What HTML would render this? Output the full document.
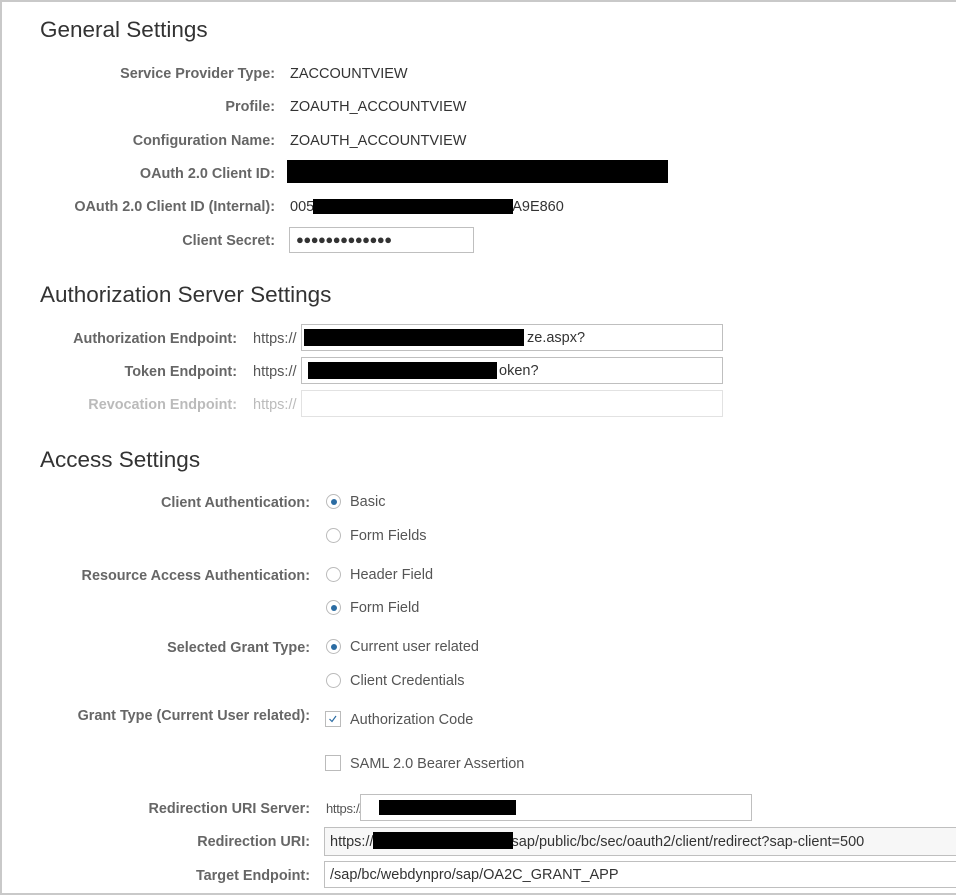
<!DOCTYPE html>
<html><head><style>
body{margin:0;width:956px;height:895px;overflow:hidden;background:#fff;font-family:"Liberation Sans",Arial,sans-serif;}
.frame{position:absolute;left:0;top:0;width:954px;height:891px;border:2px solid #c9c9c9;border-right:none;}
h2{position:absolute;margin:0;font-weight:normal;font-size:22.5px;color:#333;}
.l{position:absolute;font-weight:bold;font-size:14.4px;color:#666;text-align:right;white-space:nowrap;}
.v{position:absolute;font-size:14.5px;color:#333;white-space:nowrap;}
.in{position:absolute;border:1px solid #bfbfbf;background:#fff;box-sizing:border-box;font-size:14.5px;color:#333;padding:0 6px;white-space:nowrap;overflow:hidden;}
.blk{position:absolute;background:#000;}
.r{position:absolute;width:15px;height:15px;border:1px solid #bbb;border-radius:50%;box-sizing:border-box;background:#fff;}
.r.on::after{content:"";position:absolute;left:3.5px;top:3.5px;width:6px;height:6px;border-radius:50%;background:#2b6ca3;}
.c{position:absolute;width:16px;height:16px;border:1px solid #bbb;box-sizing:border-box;background:#fff;}
</style></head><body>
<div class="frame"></div>
<h2 style="left:40px;top:17px">General Settings</h2>
<div class="l" style="right:681px;top:66px">Service Provider Type:</div><div class="v" style="left:290px;top:66px">ZACCOUNTVIEW</div>
<div class="l" style="right:681px;top:99px">Profile:</div><div class="v" style="left:290px;top:99px">ZOAUTH_ACCOUNTVIEW</div>
<div class="l" style="right:681px;top:133px">Configuration Name:</div><div class="v" style="left:290px;top:133px">ZOAUTH_ACCOUNTVIEW</div>
<div class="l" style="right:681px;top:166px">OAuth 2.0 Client ID:</div><div class="blk" style="left:287px;top:160px;width:381px;height:23px"></div>
<div class="l" style="right:681px;top:199px">OAuth 2.0 Client ID (Internal):</div><div class="v" style="left:290px;top:199px">005<span style="display:inline-block;width:198px"></span>A9E860</div><div class="blk" style="left:313px;top:199px;width:200px;height:15px"></div>
<div class="l" style="right:681px;top:233px">Client Secret:</div><div class="in" style="left:289px;top:227px;width:185px;height:26px;line-height:24px;font-size:13px;letter-spacing:-0.5px">●●●●●●●●●●●●●</div>
<h2 style="left:40px;top:282px">Authorization Server Settings</h2>
<div class="l" style="right:719px;top:331px">Authorization Endpoint:</div><div class="v" style="left:253px;top:331px;color:#555">https://</div><div class="in" style="left:301px;top:324px;width:422px;height:27px;line-height:26px;padding-left:225px">ze.aspx?</div><div class="blk" style="left:304px;top:329px;width:220px;height:17px"></div>
<div class="l" style="right:719px;top:364px">Token Endpoint:</div><div class="v" style="left:253px;top:364px;color:#555">https://</div><div class="in" style="left:301px;top:357px;width:422px;height:27px;line-height:26px;padding-left:197px">oken?</div><div class="blk" style="left:308px;top:362px;width:189px;height:17px"></div>
<div class="l" style="right:719px;top:397px;color:#bbb">Revocation Endpoint:</div><div class="v" style="left:253px;top:397px;color:#bbb">https://</div><div class="in" style="left:301px;top:390px;width:422px;height:27px;border-color:#e2e2e2"></div>
<h2 style="left:40px;top:447px">Access Settings</h2>
<div class="l" style="right:646px;top:495px">Client Authentication:</div>
<div class="r on" style="left:326px;top:494px"></div><div class="v" style="left:350px;top:494px;color:#555">Basic</div>
<div class="r" style="left:326px;top:528px"></div><div class="v" style="left:350px;top:528px;color:#555">Form Fields</div>
<div class="l" style="right:646px;top:568px">Resource Access Authentication:</div>
<div class="r" style="left:326px;top:567px"></div><div class="v" style="left:350px;top:567px;color:#555">Header Field</div>
<div class="r on" style="left:326px;top:600px"></div><div class="v" style="left:350px;top:600px;color:#555">Form Field</div>
<div class="l" style="right:646px;top:640px">Selected Grant Type:</div>
<div class="r on" style="left:326px;top:639px"></div><div class="v" style="left:350px;top:639px;color:#555">Current user related</div>
<div class="r" style="left:326px;top:673px"></div><div class="v" style="left:350px;top:673px;color:#555">Client Credentials</div>
<div class="l" style="right:646px;top:708px">Grant Type (Current User related):</div>
<div class="c" style="left:325px;top:711px"><svg width="14" height="14" style="position:absolute;left:0;top:0"><path d="M3.5 7 L6 9.5 L10 4" stroke="#2b6ca3" stroke-width="1.2" fill="none"/></svg></div><div class="v" style="left:350px;top:712px;color:#555">Authorization Code</div>
<div class="c" style="left:325px;top:755px"></div><div class="v" style="left:350px;top:756px;color:#555">SAML 2.0 Bearer Assertion</div>
<div class="l" style="right:646px;top:801px">Redirection URI Server:</div><div class="v" style="left:326px;top:801px;color:#555;font-size:13px;letter-spacing:-0.3px">https://</div><div class="in" style="left:360px;top:794px;width:392px;height:27px"></div><div class="blk" style="left:379px;top:800px;width:137px;height:15px"></div>
<div class="l" style="right:646px;top:834px">Redirection URI:</div><div class="in" style="left:324px;top:827px;width:640px;height:29px;line-height:28px;background:#f7f7f7;padding-left:5px">https://<span style="display:inline-block;width:134px"></span>/sap/public/bc/sec/oauth2/client/redirect?sap-client=500</div><div class="blk" style="left:373px;top:832px;width:140px;height:17px"></div>
<div class="l" style="right:646px;top:868px">Target Endpoint:</div><div class="in" style="left:324px;top:861px;width:640px;height:27px;line-height:26px;padding-left:5px">/sap/bc/webdynpro/sap/OA2C_GRANT_APP</div>
</body></html>
